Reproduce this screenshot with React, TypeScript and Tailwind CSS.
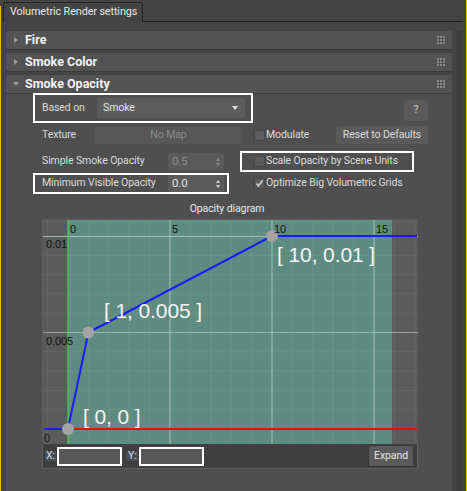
import React from 'react';

const Grip = () => (
  <div className="grid grid-cols-3 gap-[1px]">
    {Array.from({ length: 9 }).map((_, i) => (
      <div key={i} className="w-[2px] h-[2px] bg-[#8a8a8a]" />
    ))}
  </div>
);

const RolloutHeader = ({ title, open }: { title: string; open?: boolean }) => (
  <div className="h-[18px] flex items-center bg-[#535353] rounded-[2px] shadow-[0_1px_0_#3a3a3a] pl-[7px] pr-[7px]">
    <div className="w-[12px] flex items-center">
      {open ? (
        <div className="w-0 h-0 border-l-[3px] border-r-[3px] border-t-[4px] border-l-transparent border-r-transparent border-t-[#9a9a9a]" />
      ) : (
        <div className="w-0 h-0 border-t-[3px] border-b-[3px] border-l-[4px] border-t-transparent border-b-transparent border-l-[#9a9a9a] ml-[1px]" />
      )}
    </div>
    <span className="font-bold text-[#f2f2f2] text-[12.5px] tracking-normal flex-1">{title}</span>
    <Grip />
  </div>
);

const Checkbox = ({ checked }: { checked?: boolean }) => (
  <div className="w-[11px] h-[11px] bg-[#5c5c5c] border border-[#464646] flex items-center justify-center shrink-0">
    {checked && (
      <svg width="9" height="9" viewBox="0 0 9 9">
        <path d="M1.5 4.5 L3.5 7 L7.5 1.5" stroke="#cfcfcf" strokeWidth="1.6" fill="none" />
      </svg>
    )}
  </div>
);

const Spinner = ({ value, disabled }: { value: string; disabled?: boolean }) => (
  <div className="w-[56px] h-[17px] bg-[#5a5a5a] rounded-[2px] flex items-center pl-[4px] pr-[4px] shrink-0">
    <span className={`flex-1 text-[11.5px] ${disabled ? 'text-[#8e8e8e]' : 'text-[#e4e4e4]'}`}>{value}</span>
    <div className="flex flex-col gap-[2px]">
      <div className={`w-0 h-0 border-l-[2.5px] border-r-[2.5px] border-b-[3px] border-l-transparent border-r-transparent ${disabled ? 'border-b-[#8e8e8e]' : 'border-b-[#d8d8d8]'}`} />
      <div className={`w-0 h-0 border-l-[2.5px] border-r-[2.5px] border-t-[3px] border-l-transparent border-r-transparent ${disabled ? 'border-t-[#8e8e8e]' : 'border-t-[#d8d8d8]'}`} />
    </div>
  </div>
);

const OpacityDiagram = () => {
  const unitX = 20.4;
  const x0 = 25;
  const yTop = 16;
  const unitY = 19.3;
  const vMinor = Array.from({ length: 19 }, (_, i) => x0 + (i - 1) * unitX);
  const hMinor = Array.from({ length: 12 }, (_, i) => yTop + i * unitY);
  const px = (v: number) => x0 + v * unitX;
  const py = (v: number) => yTop + (0.01 - v) * 1000 * unitY;

  return (
    <svg width="375" height="224" viewBox="0 0 375 224" className="block">
      <rect x="0" y="0" width="375" height="224" fill="#5b5b5b" />
      <rect x={x0} y="0" width="324" height="224" fill="#5f8c80" />
      {vMinor.map((x, i) => (
        <line key={`v${i}`} x1={x} y1="0" x2={x} y2="224" stroke="#ffffff" strokeOpacity="0.06" />
      ))}
      {[yTop - unitY * 0.75, ...hMinor].map((y, i) => (
        <line key={`h${i}`} x1="0" y1={y} x2="375" y2={y} stroke="#ffffff" strokeOpacity="0.06" />
      ))}
      {[5, 10, 15].map((v) => (
        <line key={v} x1={px(v)} y1="0" x2={px(v)} y2="224" stroke="#b4ccc5" strokeOpacity="0.75" />
      ))}
      <line x1="0" y1={yTop + 0.5} x2="375" y2={yTop + 0.5} stroke="#b4ccc5" strokeOpacity="0.75" />
      <line x1="0" y1={py(0.005)} x2="375" y2={py(0.005)} stroke="#b4ccc5" strokeOpacity="0.6" />
      <line x1={x0} y1="0" x2={x0} y2="224" stroke="#3ee03e" />
      <line x1={x0} y1={py(0)} x2="374" y2={py(0)} stroke="#ff0000" strokeWidth="2" />
      <polyline
        points={`1,${py(0)} ${x0},${py(0)} ${px(1)},${py(0.005)} ${px(10)},${py(0.01)} 374,${py(0.01)}`}
        fill="none"
        stroke="#1a1aff"
        strokeWidth="2"
      />
      <circle cx={x0} cy={py(0)} r="6" fill="#a3a3a3" />
      <circle cx={px(1)} cy={py(0.005)} r="6" fill="#a3a3a3" />
      <circle cx={px(10)} cy={py(0.01)} r="6" fill="#a3a3a3" />
      <g fontFamily="'Liberation Sans', Arial, sans-serif" fontSize="11" fill="#111111">
        <text x={x0 + 2} y="13">0</text>
        <text x={px(5) + 2} y="13">5</text>
        <text x={px(10) + 2} y="13">10</text>
        <text x={px(15) + 2} y="13">15</text>
        <text x="3" y={yTop + 12}>0.01</text>
        <text x="3" y={py(0.005) + 12}>0.005</text>
        <text x="1" y={py(0) + 13}>0</text>
      </g>
      <g fontFamily="'Liberation Sans', Arial, sans-serif" fontSize="21" fill="#f4f4f4">
        <text x="61" y="98">[ 1, 0.005 ]</text>
        <text x="234" y="42">[ 10, 0.01 ]</text>
        <text x="40" y="204">[ 0, 0 ]</text>
      </g>
    </svg>
  );
};

export default function App() {
  return (
    <div className="w-[467px] h-[491px] bg-[#444444] flex overflow-hidden font-['Roboto',sans-serif] text-[10.5px] tracking-[-0.1px] text-[#dcdcdc] leading-none whitespace-nowrap">
      <div className="w-[1px] bg-[#f0b400] mt-[6px]" />
      <div className="flex-1 flex flex-col">
        {/* tab bar */}
        <div className="h-[22px] flex items-end">
          <div className="ml-[2px] w-[140px] h-[20px] border border-b-0 border-[#262626] rounded-t-[3px] flex items-center pl-[6px] text-[#e6e6e6] text-[10.8px]">
            Volumetric Render settings
          </div>
          <div className="flex-1 border-b border-[#1e1e1e]" />
        </div>

        <div className="flex-1 flex pt-[9px]">
          <div className="ml-[5px] w-[446px] flex flex-col gap-[4px]">
            <RolloutHeader title="Fire" />
            <RolloutHeader title="Smoke Color" />
            <div className="flex-1 bg-[#4f4f4f] rounded-t-[2px]">
              <RolloutHeader title="Smoke Opacity" open />

              {/* based on */}
              <div className="flex items-start h-[30px]">
                <div className="ml-[27px] w-[220px] h-[30px] border-2 border-white flex items-center pl-[7px]">
                  <span className="w-[55px]">Based on</span>
                  <div className="w-[148px] h-[20px] bg-[#5c5c5c] rounded-[2px] flex items-center pl-[6px] pr-[7px]">
                    <span className="flex-1 text-[#e4e4e4]">Smoke</span>
                    <div className="w-0 h-0 border-l-[3px] border-r-[3px] border-t-[4px] border-l-transparent border-r-transparent border-t-[#e0e0e0]" />
                  </div>
                </div>
                <div className="ml-[151px] mt-[7px] w-[24px] h-[21px] bg-[#5a5a5a] rounded-[3px] flex items-center justify-center text-[#d0d0d0]">
                  ?
                </div>
              </div>

              {/* texture */}
              <div className="flex items-center h-[18px] mt-[3px]">
                <span className="ml-[36px] w-[53px]">Texture</span>
                <div className="w-[147px] h-[17px] bg-[#575757] rounded-[2px] flex items-center justify-center text-[#8c8c8c]">
                  No Map
                </div>
                <div className="ml-[12px]">
                  <Checkbox />
                </div>
                <span className="ml-[1px] w-[70px]">Modulate</span>
                <div className="w-[92px] h-[18px] bg-[#5a5a5a] rounded-[2px] flex items-center justify-center">
                  Reset to Defaults
                </div>
              </div>

              {/* simple smoke */}
              <div className="flex items-center h-[21px] mt-[7px]">
                <span className="ml-[36px] w-[126px]">Simple Smoke Opacity</span>
                <Spinner value="0.5" disabled />
                <div className="ml-[16px] w-[174px] h-[21px] border-2 border-white flex items-center pl-[12px] gap-[1px]">
                  <Checkbox />
                  <span>Scale Opacity by Scene Units</span>
                </div>
              </div>

              {/* min visible */}
              <div className="flex items-center h-[21px] mt-[1px]">
                <div className="ml-[27px] w-[196px] h-[21px] border-2 border-white flex items-center pl-[7px]">
                  <span className="w-[126px]">Minimum Visible Opacity</span>
                  <Spinner value="0.0" />
                </div>
                <div className="ml-[25px] flex items-center gap-[1px]">
                  <Checkbox checked />
                  <span>Optimize Big Volumetric Grids</span>
                </div>
              </div>

              <div className="mt-[10px] h-[14px] text-center mr-[4px] text-[#e8e8e8]">Opacity diagram</div>

              {/* diagram */}
              <div className="ml-[36px] mt-[1px] w-[376px] border border-[#5e5e5e]">
                <OpacityDiagram />
                <div className="h-[24px] bg-[#3f3f3f] flex items-center">
                  <span className="ml-[2px] px-[1px] bg-[#4a4f57] text-[#cfd6e0]">X:</span>
                  <div className="ml-[1px] w-[65px] h-[19px] border-2 border-white bg-[#585858]" />
                  <span className="ml-[5px] px-[1px] bg-[#4a4f57] text-[#cfd6e0]">Y:</span>
                  <div className="ml-[1px] w-[65px] h-[19px] border-2 border-white bg-[#585858]" />
                  <div className="ml-auto mr-[3px] w-[46px] h-[22px] bg-[#5a5a5a] border border-[#3a3a3a] rounded-[2px] flex items-center justify-center text-[#e4e4e4]">
                    Expand
                  </div>
                </div>
              </div>
            </div>
          </div>
          <div className="ml-[4px] w-[6px] bg-[#3c3c3c]" />
        </div>
      </div>
      <div className="w-[1px] bg-[#f0b400] ml-[3px]" />
    </div>
  );
}
